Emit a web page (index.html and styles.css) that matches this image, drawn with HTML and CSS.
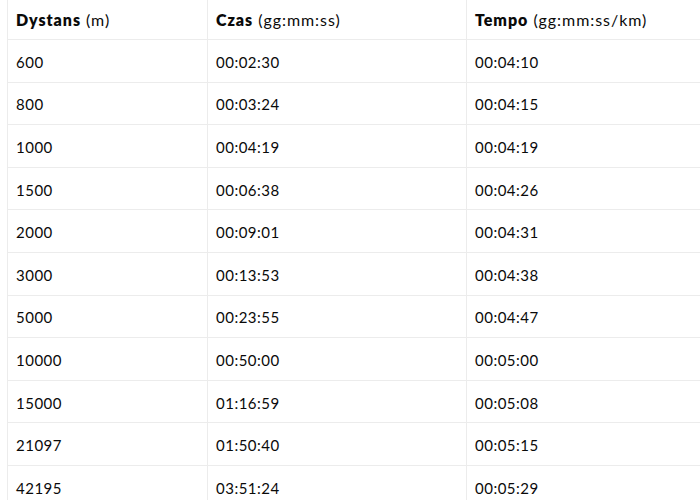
FILE: index.html
```html
<!DOCTYPE html>
<html lang="pl">
<head>
<meta charset="utf-8">
<link rel="stylesheet" href="styles.css">
</head>
<body>
<table class="pace">
  <colgroup><col class="c1"><col class="c2"><col class="c3"></colgroup>
  <thead>
    <tr><th><b>Dystans</b> (m)</th><th><b>Czas</b> (gg:mm:ss)</th><th><b>Tempo</b> (gg:mm:ss/km)</th></tr>
  </thead>
  <tbody>
    <tr><td>600</td><td>00:02:30</td><td>00:04:10</td></tr>
    <tr><td>800</td><td>00:03:24</td><td>00:04:15</td></tr>
    <tr><td>1000</td><td>00:04:19</td><td>00:04:19</td></tr>
    <tr><td>1500</td><td>00:06:38</td><td>00:04:26</td></tr>
    <tr><td>2000</td><td>00:09:01</td><td>00:04:31</td></tr>
    <tr><td>3000</td><td>00:13:53</td><td>00:04:38</td></tr>
    <tr><td>5000</td><td>00:23:55</td><td>00:04:47</td></tr>
    <tr><td>10000</td><td>00:50:00</td><td>00:05:00</td></tr>
    <tr><td>15000</td><td>01:16:59</td><td>00:05:08</td></tr>
    <tr><td>21097</td><td>01:50:40</td><td>00:05:15</td></tr>
    <tr><td>42195</td><td>03:51:24</td><td>00:05:29</td></tr>
  </tbody>
</table>
</body>
</html>
```
FILE: styles.css
```css
html, body {
  margin: 0;
  padding: 0;
  background: #fff;
  overflow: hidden;
  width: 700px;
  height: 500px;
}
body {
  font-family: Lato, "Noto Sans", sans-serif;
  color: #0a0a0a;
  font-size: 15px;
  letter-spacing: 0.5px;
}
.pace {
  border-collapse: collapse;
  table-layout: fixed;
  width: 760px;
  margin-left: 7px;
  margin-top: -3px;
}
.c1 { width: 200px; }
.c2 { width: 259px; }
.c3 { width: 301px; }
.pace th, .pace td {
  border: 1px solid #ececec;
  padding: 2px 8px 0;
  height: 42.6px;
  box-sizing: border-box;
  text-align: left;
  vertical-align: middle;
  font-weight: 400;
  white-space: nowrap;
}
.pace th {
  font-size: 16px;
  letter-spacing: 0.95px;
}
.pace th b { font-weight: 800; }
.pace thead th { border-top: none; }
```
